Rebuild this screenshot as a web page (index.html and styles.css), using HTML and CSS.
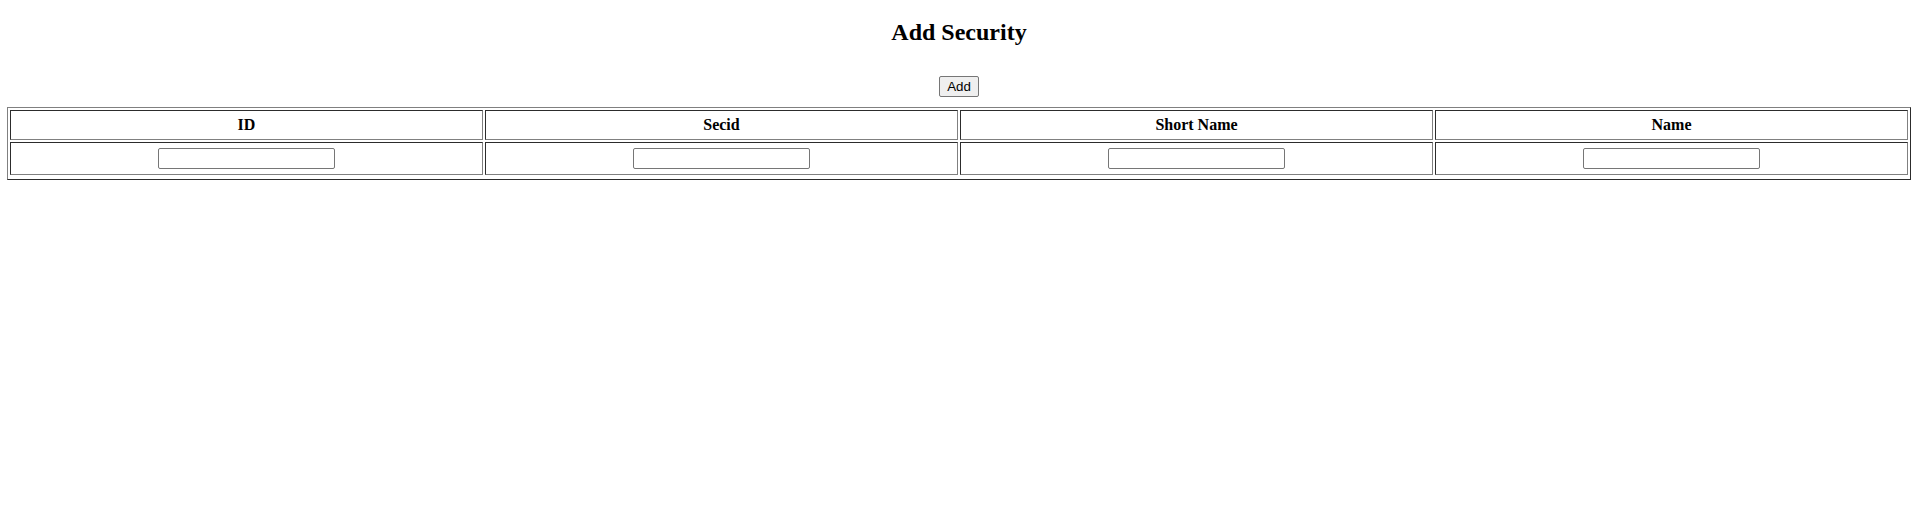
FILE: index.html
```html
<!DOCTYPE html>
<html>
<head>
<meta charset="utf-8">
<title>Add Security</title>
<link rel="stylesheet" href="styles.css">
</head>
<body class="page">
<h2 class="title">Add Security</h2>
<div class="actions"><button class="add-btn" type="button">Add</button></div>
<table class="grid">
<thead>
<tr><th>ID</th><th>Secid</th><th>Short Name</th><th>Name</th></tr>
</thead>
<tbody>
<tr>
<td><input class="field" type="text"></td>
<td><input class="field" type="text"></td>
<td><input class="field" type="text"></td>
<td><input class="field" type="text"></td>
</tr>
</tbody>
</table>
</body>
</html>
```
FILE: styles.css
```css
html, body {
  background: #ffffff;
}
.page {
  margin: 0;
  padding: 0 6px 0 7px;
  font-family: "Liberation Serif", "Times New Roman", serif;
  font-size: 16px;
  color: #000;
}
.title {
  font-size: 24px;
  font-weight: bold;
  line-height: 28px;
  margin: 18px 0 0;
  text-align: center;
}
.actions {
  display: flex;
  justify-content: center;
  margin-top: 30px;
}
.add-btn {
  box-sizing: border-box;
  width: 40px;
  height: 21px;
  padding: 0;
  font-family: "Liberation Sans", Arial, sans-serif;
  font-size: 13.33px;
  color: #000;
  background: #efefef;
  border: 1px solid #767676;
  border-radius: 2px;
}
.grid {
  width: 100%;
  margin-top: 10px;
  border: 1px outset gray;
  border-spacing: 2px;
  padding-bottom: 2px;
}
.grid th, .grid td {
  width: 25%;
  border: 1px inset gray;
  padding: 5px;
  text-align: center;
}
.grid th {
  font-size: 16px;
  font-weight: bold;
  line-height: 18px;
  height: 18px;
}
.grid td {
  height: 21px;
  line-height: 21px;
}
.field {
  box-sizing: border-box;
  display: inline-block;
  vertical-align: top;
  width: 177px;
  height: 21px;
  margin: 0;
  padding: 1px 2px;
  font-family: "Liberation Sans", Arial, sans-serif;
  font-size: 13.33px;
  background: #fff;
  border: 1px solid #767676;
  border-radius: 2px;
}
```
